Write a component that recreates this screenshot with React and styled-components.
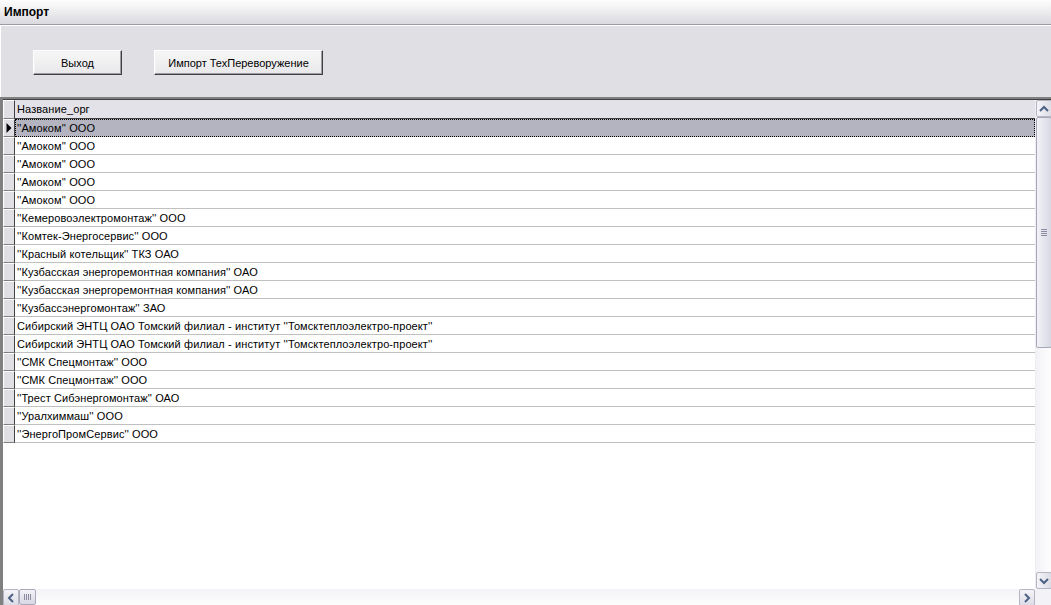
import React from "react";
import styled, { createGlobalStyle } from "styled-components";

const GlobalStyle = createGlobalStyle`
  html, body { margin: 0; padding: 0; overflow: hidden; background: #fff; }
  * { box-sizing: border-box; }
`;

const rows = [
  "''Амоком'' ООО",
  "''Амоком'' ООО",
  "''Амоком'' ООО",
  "''Амоком'' ООО",
  "''Амоком'' ООО",
  "''Кемеровоэлектромонтаж'' ООО",
  "''Комтек-Энергосервис'' ООО",
  "''Красный котельщик'' ТКЗ ОАО",
  "''Кузбасская энергоремонтная компания'' ОАО",
  "''Кузбасская энергоремонтная компания'' ОАО",
  "''Кузбассэнергомонтаж'' ЗАО",
  "Сибирский ЭНТЦ ОАО Томский филиал - институт ''Томсктеплоэлектро-проект''",
  "Сибирский ЭНТЦ ОАО Томский филиал - институт ''Томсктеплоэлектро-проект''",
  "''СМК Спецмонтаж'' ООО",
  "''СМК Спецмонтаж'' ООО",
  "''Трест Сибэнергомонтаж'' ОАО",
  "''Уралхиммаш'' ООО",
  "''ЭнергоПромСервис'' ООО",
];

const Window = styled.div`
  width: 1051px;
  height: 605px;
  display: flex;
  flex-direction: column;
  font-family: "Liberation Sans", Arial, sans-serif;
  font-size: 11px;
  color: #000;
`;

const TitleBar = styled.div`
  height: 25px;
  flex: none;
  display: flex;
  align-items: center;
  padding-left: 4px;
  font-weight: bold;
  font-size: 12px;
  background: linear-gradient(#fdfdfd, #f0f0f2 40%, #d9d9df);
  border-bottom: 1px solid #9a9aa6;
`;

const Toolbar = styled.div`
  height: 72px;
  flex: none;
  display: flex;
  align-items: flex-start;
  gap: 32px;
  padding: 24px 0 0 32px;
  background: #e0dfe3;
  border-left: 1px solid #fff;
  border-top: 1px solid #fff;
`;

const Button = styled.button`
  height: 25px;
  width: ${(p) => p.$w}px;
  font-family: inherit;
  font-size: 11px;
  color: #000;
  background: linear-gradient(#f7f7f7, #e8e8ea);
  border: 1px solid;
  border-color: #fff #404040 #404040 #fff;
  box-shadow: inset -1px -1px 0 #9d9da1, inset 1px 1px 0 #f2f2f4;
  padding: 0;
`;

const Grid = styled.div`
  flex: 1;
  min-height: 0;
  display: grid;
  grid-template-columns: 1fr 16px;
  grid-template-rows: 1fr 16px;
  border-top: 2px solid #808080;
  border-left: 3px solid #808080;
  box-shadow: inset 0 1px 0 #404040;
  padding-top: 1px;
  background: #fff;
`;

const Body = styled.div`
  overflow: hidden;
  background: #fff;
`;

const Row = styled.div`
  display: flex;
  height: ${(p) => (p.$header ? 19 : 18)}px;
  background: ${(p) => (p.$header ? "#e3e2e8" : p.$selected ? "#b4b4c0" : "#fff")};
`;

const Indicator = styled.div`
  width: 12px;
  flex: none;
  background: #e0dfe3;
  border-top: 1px solid #fff;
  border-left: 1px solid #fff;
  border-right: 1px solid #404040;
  border-bottom: 1px solid #808080;
  display: flex;
  align-items: center;
  justify-content: center;
`;

const Cell = styled.div`
  flex: 1;
  display: flex;
  align-items: center;
  padding-left: 2px;
  white-space: nowrap;
  letter-spacing: 0.1px;
  border-bottom: 1px solid ${(p) => (p.$header ? "#404040" : "#c0c0c0")};
  outline: ${(p) => (p.$selected ? "1px dotted #000" : "none")};
  outline-offset: -1px;
`;

const Arrow = () => (
  <svg width="6" height="10" viewBox="0 0 6 10">
    <path d="M0.5 0 L5.5 5 L0.5 10 Z" fill="#000" />
  </svg>
);

const VScroll = styled.div`
  display: flex;
  flex-direction: column;
  background: linear-gradient(90deg, #f3f3f7, #fdfdfe);
  border-left: 1px solid #eeeef2;
`;

const HScroll = styled.div`
  display: flex;
  background: linear-gradient(#f3f3f7, #fdfdfe);
`;

const ScrollBtn = styled.div`
  width: 16px;
  height: 17px;
  flex: none;
  display: flex;
  align-items: center;
  justify-content: center;
  background: linear-gradient(${(p) => (p.$h ? "180deg" : "90deg")}, #f4f4f8, #dcdce6);
  border: 1px solid #b5b5c4;
  border-radius: 2px;
`;

const Thumb = styled.div`
  flex: none;
  ${(p) => (p.$h ? "width: 17px; height: 16px;" : "height: 231px; width: 16px;")}
  display: flex;
  align-items: center;
  justify-content: center;
  background: linear-gradient(${(p) => (p.$h ? "180deg" : "90deg")}, #f2f2f7, #d8d8e4);
  border: 1px solid #a8a8b8;
  border-radius: 2px;
`;

const Track = styled.div`
  flex: 1;
`;

const Corner = styled.div`
  background: #f3f3f7;
`;

const Chevron = ({ dir }) => {
  const d = {
    up: "M3 9 L7 5 L11 9",
    down: "M3 5 L7 9 L11 5",
    left: "M9 3 L5 7 L9 11",
    right: "M5 3 L9 7 L5 11",
  }[dir];
  return (
    <svg width="14" height="14" viewBox="0 0 14 14">
      <path d={d} fill="none" stroke="#4d6185" strokeWidth="2" />
    </svg>
  );
};

const Grip = ({ h }) => (
  <svg width="8" height="8" viewBox="0 0 8 8">
    {[0, 2, 4, 6].map((i) =>
      h ? (
        <line key={i} x1={i + 0.5} y1="1" x2={i + 0.5} y2="7" stroke="#8a8aa0" />
      ) : (
        <line key={i} x1="1" y1={i + 0.5} x2="7" y2={i + 0.5} stroke="#8a8aa0" />
      )
    )}
  </svg>
);

export default function App() {
  return (
    <Window>
      <GlobalStyle />
      <TitleBar>Импорт</TitleBar>
      <Toolbar>
        <Button $w={89}>Выход</Button>
        <Button $w={169}>Импорт ТехПереворужение</Button>
      </Toolbar>
      <Grid>
        <Body>
          <Row $header>
            <Indicator />
            <Cell $header>Название_орг</Cell>
          </Row>
          {rows.map((r, i) => (
            <Row key={i} $selected={i === 0}>
              <Indicator>{i === 0 && <Arrow />}</Indicator>
              <Cell $selected={i === 0}>{r}</Cell>
            </Row>
          ))}
        </Body>
        <VScroll>
          <ScrollBtn><Chevron dir="up" /></ScrollBtn>
          <Thumb><Grip /></Thumb>
          <Track />
          <ScrollBtn><Chevron dir="down" /></ScrollBtn>
        </VScroll>
        <HScroll>
          <ScrollBtn $h><Chevron dir="left" /></ScrollBtn>
          <Thumb $h><Grip h /></Thumb>
          <Track />
          <ScrollBtn $h><Chevron dir="right" /></ScrollBtn>
        </HScroll>
        <Corner />
      </Grid>
    </Window>
  );
}
